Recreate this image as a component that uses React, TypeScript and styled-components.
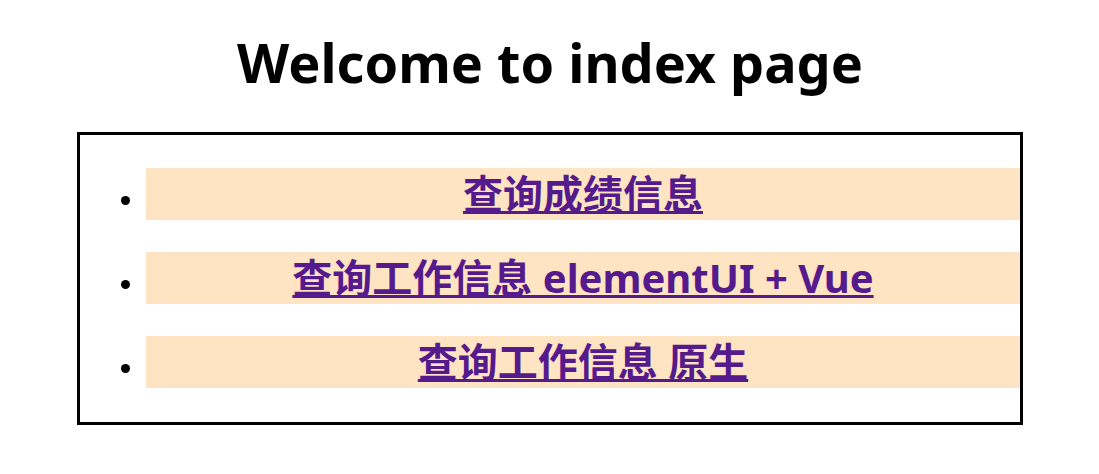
import React from 'react';
import styled, { createGlobalStyle } from 'styled-components';

const GlobalStyle = createGlobalStyle`
  * { box-sizing: border-box; }
  body {
    margin: 0;
    background: #fff;
    color: #000;
    font-family: "Noto Sans", "Noto Sans CJK SC", sans-serif;
  }
`;

const Page = styled.main`
  padding: 24px 76px 24px 77px;
`;

const Title = styled.h1`
  margin: 0 0 32px;
  font-size: 54px;
  line-height: 76px;
  font-weight: 700;
  text-align: center;
`;

const Menu = styled.ul`
  display: grid;
  gap: 32px;
  margin: 0;
  padding: 33px 0 34px 66px;
  border: 3px solid #000;
`;

const MenuItem = styled.li`
  font-size: 26px;
  line-height: 40px;
  background: bisque;
  text-align: center;
`;

const MenuLink = styled.a`
  color: #551a8b;
  font-size: 40px;
  line-height: 52px;
  font-weight: 700;
  text-decoration: underline;
  text-decoration-thickness: 3px;
  text-decoration-skip-ink: none;
`;

const links = ['查询成绩信息', '查询工作信息 elementUI + Vue', '查询工作信息 原生'];

export default function App() {
  return (
    <Page>
      <GlobalStyle />
      <Title>Welcome to index page</Title>
      <Menu>
        {links.map((label) => (
          <MenuItem key={label}>
            <MenuLink href="#">{label}</MenuLink>
          </MenuItem>
        ))}
      </Menu>
    </Page>
  );
}
